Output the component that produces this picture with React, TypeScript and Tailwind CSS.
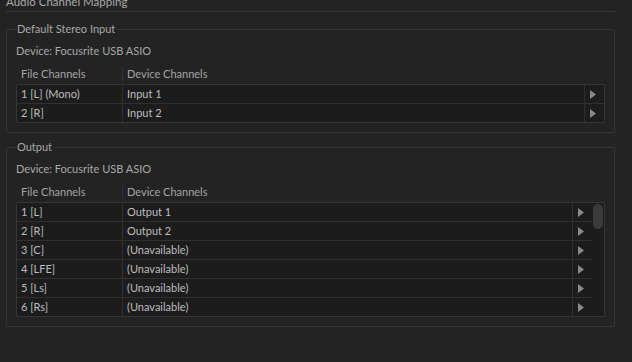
import React from "react";

const inputRows = [
  { file: "1 [L] (Mono)", device: "Input 1" },
  { file: "2 [R]", device: "Input 2" },
];

const outputRows = [
  { file: "1 [L]", device: "Output 1" },
  { file: "2 [R]", device: "Output 2" },
  { file: "3 [C]", device: "(Unavailable)" },
  { file: "4 [LFE]", device: "(Unavailable)" },
  { file: "5 [Ls]", device: "(Unavailable)" },
  { file: "6 [Rs]", device: "(Unavailable)" },
];

function Arrow() {
  return (
    <svg width="6" height="9" viewBox="0 0 6 9" className="block">
      <path d="M0 0 L6 4.5 L0 9 Z" fill="#8a8a8a" />
    </svg>
  );
}

function HeaderRow() {
  return (
    <div className="flex h-[16px] items-center text-[#a3a3a3]">
      <div className="w-[106px] pl-[5px]">File Channels</div>
      <div className="h-[14px] border-l border-[#333333] pl-[4px] leading-[14px]">Device Channels</div>
    </div>
  );
}

function Row({ file, device, last }: { file: string; device: string; last: boolean }) {
  return (
    <div className={`flex ${last ? "h-[18px]" : "h-[19px] border-b border-[#303030]"}`}>
      <div className="flex w-[105px] items-center pl-[4px] pt-[1px]">{file}</div>
      <div className="flex flex-1 items-center border-l border-[#303030] pl-[4px] pt-[1px]">{device}</div>
      <div className="flex w-[20px] items-center border-l border-[#303030] pl-[5px]">
        <Arrow />
      </div>
    </div>
  );
}

function Group({
  title,
  rows,
  scroll,
}: {
  title: string;
  rows: { file: string; device: string }[];
  scroll?: boolean;
}) {
  return (
    <fieldset className="rounded-[2px] border border-[#353535] px-[9px] pb-[9px]">
      <legend className="ml-[-1px] px-[2px] leading-[14px] text-[#a8a8a8]">{title}</legend>
      <div className="mt-[8px] leading-[14px] text-[#a8a8a8]">Device: Focusrite USB ASIO</div>
      <div className="mt-[8px]">
        <HeaderRow />
      </div>
      <div className="mt-[2px] flex rounded-[2px] border border-[#363636] bg-[#1c1c1c] text-[#bdbdbd]">
        <div className="flex-1">
          {rows.map((r, i) => (
            <Row key={r.file} file={r.file} device={r.device} last={i === rows.length - 1} />
          ))}
        </div>
        {scroll && (
          <div className="w-[12px] pt-[1px] pl-[1px]">
            <div className="h-[25px] w-[10px] rounded-full bg-[#3a3a3a]" />
          </div>
        )}
      </div>
    </fieldset>
  );
}

export default function App() {
  return (
    <div
      className="h-[362px] w-[632px] overflow-hidden bg-[#232323] pl-[6px] pr-[17px] text-[11px]"
      style={{ fontFamily: "Lato, 'Open Sans', sans-serif" }}
    >
      {/* Panel title, cut off by the window top */}
      <div className="mt-[-6px] border-b border-[#363636] pb-[1px] text-[11.5px] leading-[16px] text-[#a8a8a8]">
        Audio Channel Mapping
      </div>

      <div className="mt-[10px] flex flex-col gap-[7px]">
        <Group title="Default Stereo Input" rows={inputRows} />
        <Group title="Output" rows={outputRows} scroll />
      </div>
    </div>
  );
}
